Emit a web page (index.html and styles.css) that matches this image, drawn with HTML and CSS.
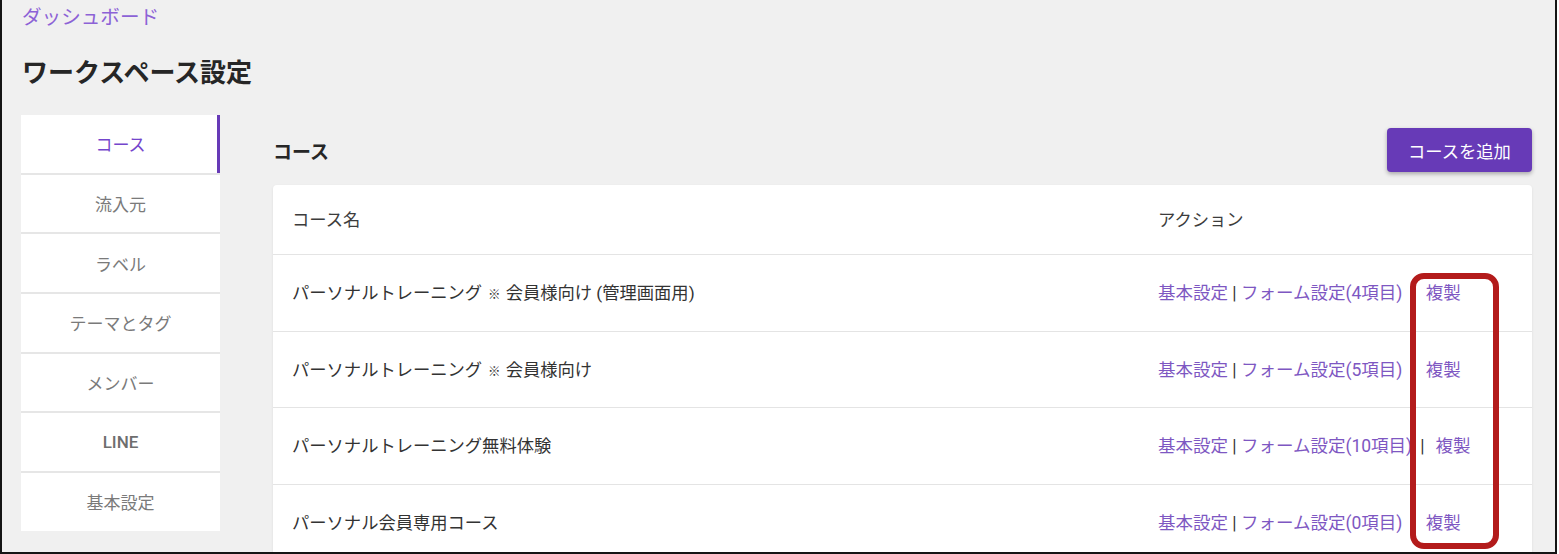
FILE: index.html
```html
<!DOCTYPE html>
<html lang="ja">
<head>
    <meta charset="UTF-8">
    <meta name="viewport" content="width=device-width, initial-scale=1.0">
    <title>ワークスペース設定</title>
    <link rel="stylesheet" href="styles.css">
</head>
<body>
<div class="frame">
    <a class="breadcrumb" href="#">ダッシュボード</a>
    <h1 class="page-title">ワークスペース設定</h1>

    <div class="layout">
        <nav class="side-nav">
            <a class="side-item active" href="#">コース</a>
            <a class="side-item" href="#">流入元</a>
            <a class="side-item" href="#">ラベル</a>
            <a class="side-item" href="#">テーマとタグ</a>
            <a class="side-item" href="#">メンバー</a>
            <a class="side-item latin" href="#">LINE</a>
            <a class="side-item" href="#">基本設定</a>
        </nav>

        <main class="content">
            <div class="content-head">
                <h2 class="section-title">コース</h2>
                <button class="add-btn">コースを追加</button>
            </div>

            <div class="card">
                <div class="row head">
                    <div class="cell">コース名</div>
                    <div class="cell">アクション</div>
                </div>
                <div class="row">
                    <div class="cell">パーソナルトレーニング<span class="mark">※</span>会員様向け (管理画面用)</div>
                    <div class="cell actions"><a href="#">基本設定</a> | <a href="#">フォーム設定(4項目)</a><span class="sep">|</span><a href="#">複製</a></div>
                </div>
                <div class="row">
                    <div class="cell">パーソナルトレーニング<span class="mark">※</span>会員様向け</div>
                    <div class="cell actions"><a href="#">基本設定</a> | <a href="#">フォーム設定(5項目)</a><span class="sep">|</span><a href="#">複製</a></div>
                </div>
                <div class="row">
                    <div class="cell">パーソナルトレーニング無料体験</div>
                    <div class="cell actions"><a href="#">基本設定</a> | <a href="#">フォーム設定(10項目)</a><span class="sep">|</span><a href="#">複製</a></div>
                </div>
                <div class="row">
                    <div class="cell">パーソナル会員専用コース</div>
                    <div class="cell actions"><a href="#">基本設定</a> | <a href="#">フォーム設定(0項目)</a><span class="sep">|</span><a href="#">複製</a></div>
                </div>
            </div>
        </main>
    </div>

    <div class="highlight"></div>
</div>
</body>
</html>
```

FILE: styles.css
```css
body {
    margin: 0;
    background: #fff;
    font-family: Roboto, "Noto Sans CJK JP", sans-serif;
}
.frame {
    position: relative;
    width: 1557px;
    height: 554px;
    box-sizing: border-box;
    border-left: 2px solid #151515;
    border-right: 2px solid #151515;
    border-bottom: 2px solid #151515;
    background: #f0f0f0;
    padding: 4px 23px 0 19px;
    overflow: hidden;
}
.breadcrumb {
    display: block;
    font-size: 19.6px;
    line-height: 28px;
    color: #8c62d6;
    text-decoration: none;
    padding-left: 1px;
}
.page-title {
    margin: 23px 0 24px;
    font-size: 26px;
    line-height: 36px;
    font-weight: 700;
    color: #262626;
    padding-left: 1px;
}
.layout {
    display: flex;
    gap: 53px;
}
.side-nav {
    width: 199px;
    flex: none;
    display: flex;
    flex-direction: column;
    align-self: flex-start;
}
.side-item {
    display: flex;
    align-items: center;
    justify-content: center;
    height: 57.7px;
    background: #fff;
    border-bottom: 2px solid #e6e6e6;
    font-size: 17px;
    color: #7a7a7a;
    text-decoration: none;
}
.side-item:last-child {
    border-bottom: none;
}
.side-item.active {
    color: #7446cc;
    box-shadow: inset -3px 0 0 #673ab7;
}
.side-item.latin {
    font-weight: 500;
    color: #6e6e6e;
}
.content {
    flex: 1;
    min-width: 0;
}
.content-head {
    display: flex;
    align-items: center;
    justify-content: space-between;
    margin-top: 13px;
    height: 44px;
}
.section-title {
    margin: 0;
    font-size: 19px;
    font-weight: 700;
    color: #262626;
}
.add-btn {
    height: 44px;
    width: 145px;
    border: none;
    border-radius: 4px;
    background: #673ab7;
    color: #fff;
    font-family: inherit;
    font-size: 17.3px;
    box-shadow: 0 2px 4px rgba(0, 0, 0, 0.3);
}
.card {
    margin-top: 13px;
    background: #fff;
    border-radius: 4px;
    box-shadow: 0 1px 3px rgba(0, 0, 0, 0.08);
}
.row {
    display: grid;
    grid-template-columns: 1fr 393px;
    height: 75.5px;
    align-items: center;
    border-bottom: 1px solid #e4e4e4;
    font-size: 17.3px;
    color: #333;
}
.row.head {
    height: 69px;
    color: #3c3c3c;
}
.cell {
    padding: 0 20px 2px 19px;
    white-space: nowrap;
}
.mark {
    font-size: 12.5px;
    margin: 0 5px 0 6px;
}
.actions {
    font-size: 17.5px;
    color: #333;
}
.actions a {
    color: #7e57c2;
    text-decoration: none;
}
.sep {
    margin: 0 11px 0 8px;
}
.highlight {
    position: absolute;
    left: 1408px;
    top: 273px;
    width: 89px;
    height: 276px;
    box-sizing: border-box;
    border: 6px solid #b31b1b;
    border-radius: 14px;
}
```
